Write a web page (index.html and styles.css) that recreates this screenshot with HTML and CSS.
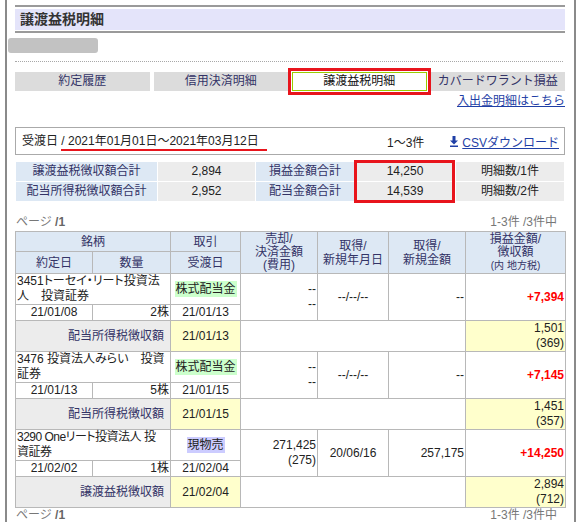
FILE: index.html
```html
<!DOCTYPE html>
<html lang="ja">
<head>
<meta charset="utf-8">
<title>譲渡益税明細</title>
<link rel="stylesheet" href="styles.css">
</head>
<body>
<div class="frame">
  <div class="content">
    <div class="title-bar"><h1 class="title">譲渡益税明細</h1></div>
    <div class="blurred"></div>
    <div class="dotted"></div>
    <nav class="tabs">
      <a class="tab">約定履歴</a>
      <a class="tab">信用決済明細</a>
      <a class="tab active">譲渡益税明細</a>
      <a class="tab">カバードワラント損益</a>
    </nav>
    <div class="linkrow"><a class="link">入出金明細はこちら</a></div>

    <div class="datebox">
      <span class="datelabel">受渡日 <span class="daterange">/ 2021年01月01日～2021年03月12日</span></span>
      <span class="count">1～3件</span>
      <a class="link csv"><svg class="dl" width="8" height="11" viewBox="0 0 8 11"><path d="M2.5 0h3v4.5h2.5L4 8.5 0 4.5h2.5z" fill="#1f3fa6"/><rect x="0" y="9.5" width="8" height="1.5" fill="#1f3fa6"/></svg>CSVダウンロード</a>
    </div>

    <div class="summary-wrap">
      <table class="summary">
        <tr>
          <td class="lbl">譲渡益税徴収額合計</td>
          <td class="val">2,894</td>
          <td class="lbl">損益金額合計</td>
          <td class="val">14,250</td>
          <td class="val">明細数/1件</td>
        </tr>
        <tr>
          <td class="lbl">配当所得税徴収額合計</td>
          <td class="val">2,952</td>
          <td class="lbl">配当金額合計</td>
          <td class="val">14,539</td>
          <td class="val">明細数/2件</td>
        </tr>
      </table>
      <div class="annot"></div>
    </div>

    <div class="pager"><span>ページ <b>/1</b></span><span>1-3件 /3件中</span></div>

    <table class="detail">
      <colgroup>
        <col class="w77"><col class="w78"><col class="w70"><col class="w77"><col class="w71"><col class="w77"><col class="w100">
      </colgroup>
      <thead>
        <tr class="h1">
          <th colspan="2">銘柄</th>
          <th>取引</th>
          <th rowspan="2" class="tight">売却/<br>決済金額<br>(費用)</th>
          <th rowspan="2">取得/<br>新規年月日</th>
          <th rowspan="2">取得/<br>新規金額</th>
          <th rowspan="2" class="tight">損益金額/<br>徴収額<br><small>(内 地方税)</small></th>
        </tr>
        <tr class="h2">
          <th>約定日</th>
          <th>数量</th>
          <th>受渡日</th>
        </tr>
      </thead>
      <tbody>
        <tr class="r-name">
          <td colspan="2" class="name">3451トーセイ・リート投資法<br>人　投資証券</td>
          <td class="c"><span class="tag div">株式配当金</span></td>
          <td rowspan="2" class="r">--<br>--</td>
          <td rowspan="2" class="c">--/--/--</td>
          <td rowspan="2" class="r">--</td>
          <td rowspan="2" class="r pl">+7,394</td>
        </tr>
        <tr class="r-date">
          <td class="c">21/01/08</td>
          <td class="r">2株</td>
          <td class="c">21/01/13</td>
        </tr>
        <tr class="r-tax">
          <td colspan="2" class="taxlabel">配当所得税徴収額</td>
          <td class="c yel">21/01/13</td>
          <td colspan="3"></td>
          <td class="r yel">1,501<br>(369)</td>
        </tr>

        <tr class="r-name">
          <td colspan="2" class="name">3476 投資法人みらい　投資<br>証券</td>
          <td class="c"><span class="tag div">株式配当金</span></td>
          <td rowspan="2" class="r">--<br>--</td>
          <td rowspan="2" class="c">--/--/--</td>
          <td rowspan="2" class="r">--</td>
          <td rowspan="2" class="r pl">+7,145</td>
        </tr>
        <tr class="r-date">
          <td class="c">21/01/13</td>
          <td class="r">5株</td>
          <td class="c">21/01/15</td>
        </tr>
        <tr class="r-tax">
          <td colspan="2" class="taxlabel">配当所得税徴収額</td>
          <td class="c yel">21/01/15</td>
          <td colspan="3"></td>
          <td class="r yel">1,451<br>(357)</td>
        </tr>

        <tr class="r-name">
          <td colspan="2" class="name tightname">3290 Oneリート投資法人 投<br>資証券</td>
          <td class="c"><span class="tag sell">現物売</span></td>
          <td rowspan="2" class="r">271,425<br>(275)</td>
          <td rowspan="2" class="c">20/06/16</td>
          <td rowspan="2" class="r">257,175</td>
          <td rowspan="2" class="r pl">+14,250</td>
        </tr>
        <tr class="r-date short">
          <td class="c">21/02/02</td>
          <td class="r">1株</td>
          <td class="c">21/02/04</td>
        </tr>
        <tr class="r-tax">
          <td colspan="2" class="taxlabel">譲渡益税徴収額</td>
          <td class="c yel">21/02/04</td>
          <td colspan="3"></td>
          <td class="r yel">2,894<br>(712)</td>
        </tr>
      </tbody>
    </table>

    <div class="pager bottom"><span>ページ <b>/1</b></span><span>1-3件 /3件中</span></div>
  </div>
</div>
</body>
</html>
```

FILE: styles.css
```css
* { box-sizing: border-box; }
html, body { margin: 0; padding: 0; background: #fff; }
body {
  font-family: "Liberation Sans", "Noto Sans CJK JP", sans-serif;
  font-size: 12px;
  color: #222;
}
.frame {
  margin-left: 5px;
  width: 571px;
  height: 522px;
  border-left: 2px solid #8a8a8a;
  border-right: 2px solid #8a8a8a;
}
.content {
  padding: 5px 9px 0 8px;
}
.title-bar {
  border-top: 2px solid #9a9a9a;
  border-bottom: 2px solid #9a9a9a;
  padding: 2px 0 1px;
}
.title {
  margin: 0;
  background: #e4e4fa;
  height: 21px;
  line-height: 21px;
  padding-left: 5px;
  font-size: 14px;
  font-weight: bold;
  color: #333;
}
.blurred {
  margin: 5px 0 0 -7px;
  width: 90px;
  height: 15px;
  background: #c2c2c2;
  border-radius: 3px;
  filter: blur(0.7px);
}
.dotted {
  margin-top: 8px;
  border-top: 1px dotted #a8a8a8;
  margin-right: 2px;
}
.tabs {
  margin-top: 10px;
  display: grid;
  grid-template-columns: repeat(4, 1fr);
  column-gap: 4px;
}
.tab {
  height: 19px;
  line-height: 19px;
  text-align: center;
  background: #dcdcdc;
  color: #333366;
  font-size: 12px;
}
.tab.active {
  background: #fff;
  border: 1px solid #99cc00;
  line-height: 17px;
  color: #111;
  outline: 3px solid #e8141c;
  outline-offset: 1px;
}
.linkrow {
  text-align: right;
  height: 17px;
  line-height: 16px;
  padding-top: 2px;
}
.link {
  color: #1f3fa6;
  text-decoration: underline;
}
.datebox {
  margin-top: 19px;
  height: 28px;
  border: 1px solid #aaa;
  display: flex;
  align-items: center;
  padding: 0 5px 0 6px;
}
.datelabel { flex: 1; }
.daterange {
  display: inline-block;
  border-bottom: 2px solid #e8141c;
  padding-right: 8px;
  line-height: 15px;
}
.count { margin-right: 26px; }
.csv { display: inline-flex; align-items: center; }
.dl { margin-right: 4px; }

.summary-wrap {
  position: relative;
  margin-top: 6px;
}
.summary {
  width: 550px;
  border-spacing: 1px;
  table-layout: fixed;
}
.summary td {
  height: 19px;
  padding: 0;
  text-align: center;
  line-height: 19px;
}
.summary td:nth-child(1) { width: 141px; }
.summary td:nth-child(2) { width: 97px; }
.summary td:nth-child(3) { width: 98px; }
.summary td:nth-child(4) { width: 100px; }
.summary .lbl { background: #dde8f4; color: #333366; }
.summary .val { background: #ececec; color: #222; }
.annot {
  position: absolute;
  left: 339px;
  top: -1px;
  width: 101px;
  height: 43px;
  border: 3px solid #e8141c;
}

.pager {
  margin-top: 12px;
  height: 17px;
  line-height: 17px;
  display: flex;
  justify-content: space-between;
  color: #777;
  padding: 0 8px 0 1px;
}
.pager b { font-weight: bold; color: #666; }
.pager.bottom { margin-top: 0; height: 14px; line-height: 14px; }

.detail {
  width: 551px;
  border-collapse: collapse;
  table-layout: fixed;
}
.w77 { width: 77px; }
.w78 { width: 78px; }
.w70 { width: 70px; }
.w71 { width: 71px; }
.w100 { width: 100px; }
.detail th, .detail td {
  border: 1px solid #b8b8b8;
  padding: 0 1px;
  line-height: 15px;
}
.detail th {
  background: #dde8f4;
  color: #333366;
  font-weight: normal;
  text-align: center;
  line-height: 14px;
}
.detail th.tight { line-height: 13px; }
.detail th small { font-size: 10px; }
.h1 { height: 20px; }
.h2 { height: 22px; }
.r-name { height: 31px; }
.r-date { height: 16px; }
.r-date.short { height: 15px; }
.r-tax { height: 31px; }
.detail .name {
  text-align: left;
  font-feature-settings: "palt";
  white-space: nowrap;
}
.detail .tightname { letter-spacing: -0.5px; }
.c { text-align: center; }
.r { text-align: right; }
.tag { padding: 1px 1px; }
.tag.div { background: #ccffcc; }
.tag.sell { background: #ccccff; }
.pl { color: #f00; font-weight: bold; }
.taxlabel {
  background: #ececec;
  color: #333366;
  text-align: right;
  padding-right: 6px !important;
}
.yel { background: #ffffcc; }
```
